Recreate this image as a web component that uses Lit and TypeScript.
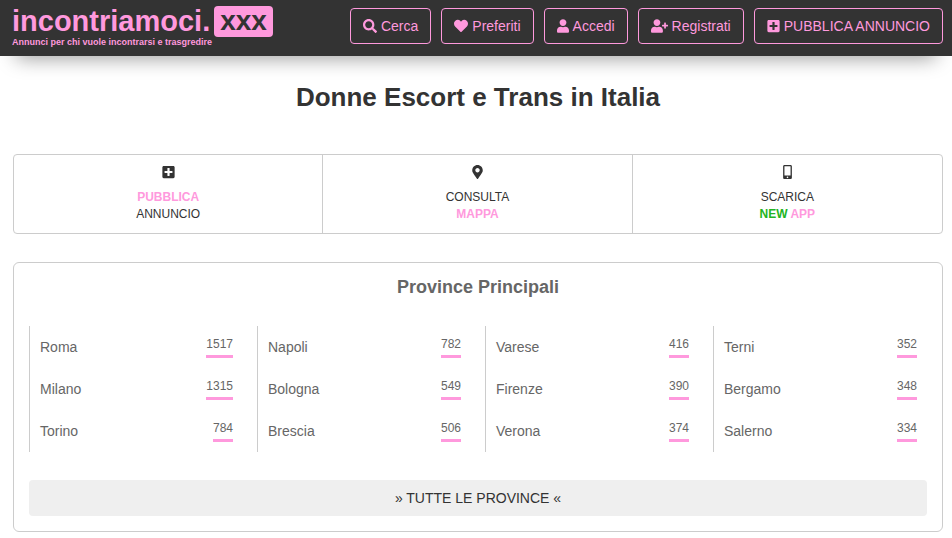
import { LitElement, html, css, svg } from "lit";
import { customElement, property } from "lit/decorators.js";

type Glyph = { box: string; width: number; d: string };

const glyphs: Record<string, Glyph> = {
  search: {
    box: "0 0 512 512",
    width: 14,
    d: "M505 442.7L405.3 343c-4.500-4.500-10.600-7-17-7H372c27.600-35.300 44-79.700 44-128C416 93.100 322.900 0 208 0S0 93.100 0 208s93.100 208 208 208c48.300 0 92.700-16.400 128-44v16.300c0 6.400 2.500 12.500 7 17l99.700 99.700c9.400 9.400 24.600 9.400 33.900 0l28.300-28.300c9.400-9.400 9.400-24.600.1-34zM208 336c-70.700 0-128-57.200-128-128 0-70.700 57.200-128 128-128 70.700 0 128 57.200 128 128 0 70.700-57.200 128-128 128z",
  },
  heart: {
    box: "0 0 512 512",
    width: 14,
    d: "M462.3 62.600C407.500 15.900 326 24.300 275.700 76.200L256 96.500l-19.700-20.300C186.100 24.300 104.500 15.900 49.700 62.600c-62.800 53.600-66.100 149.800-9.900 207.900l193.500 199.800c12.500 12.900 32.800 12.900 45.300 0l193.500-199.800c56.300-58.100 53-154.300-9.800-207.900z",
  },
  user: {
    box: "0 0 448 512",
    width: 12,
    d: "M224 256c70.700 0 128-57.300 128-128S294.700 0 224 0 96 57.300 96 128s57.300 128 128 128zm89.600 32h-16.700c-22.200 10.200-46.900 16-72.900 16s-50.600-5.800-72.900-16h-16.700C60.200 288 0 348.200 0 422.400V464c0 26.500 21.500 48 48 48h352c26.500 0 48-21.500 48-48v-41.600c0-74.200-60.200-134.400-134.400-134.400z",
  },
  userPlus: {
    box: "0 0 640 512",
    width: 17,
    d: "M624 208h-64v-64c0-8.800-7.200-16-16-16h-32c-8.800 0-16 7.200-16 16v64h-64c-8.800 0-16 7.200-16 16v32c0 8.800 7.200 16 16 16h64v64c0 8.800 7.200 16 16 16h32c8.800 0 16-7.200 16-16v-64h64c8.800 0 16-7.200 16-16v-32c0-8.800-7.200-16-16-16zm-400 48c70.700 0 128-57.300 128-128S294.700 0 224 0 96 57.300 96 128s57.300 128 128 128zm89.600 32h-16.700c-22.200 10.200-46.900 16-72.900 16s-50.600-5.800-72.900-16h-16.700C60.200 288 0 348.200 0 422.400V464c0 26.500 21.500 48 48 48h352c26.500 0 48-21.500 48-48v-41.600c0-74.200-60.200-134.400-134.400-134.400z",
  },
  plusSquare: {
    box: "0 0 448 512",
    width: 13,
    d: "M400 32H48C21.500 32 0 53.500 0 80v352c0 26.500 21.500 48 48 48h352c26.500 0 48-21.500 48-48V80c0-26.500-21.500-48-48-48zm-32 252c0 6.600-5.400 12-12 12h-92v92c0 6.600-5.400 12-12 12h-56c-6.600 0-12-5.400-12-12v-92H92c-6.600 0-12-5.400-12-12v-56c0-6.600 5.400-12 12-12h92v-92c0-6.600 5.400-12 12-12h56c6.600 0 12 5.400 12 12v92h92c6.600 0 12 5.400 12 12v56z",
  },
  pin: {
    box: "0 0 384 512",
    width: 11,
    d: "M172.268 501.670C26.970 291.031 0 269.413 0 192 0 85.961 85.961 0 192 0s192 85.961 192 192c0 77.413-26.970 99.031-172.268 309.670-9.535 13.774-29.930 13.773-39.464 0zM192 272c44.183 0 80-35.817 80-80s-35.817-80-80-80-80 35.817-80 80 35.817 80 80 80z",
  },
  phone: {
    box: "0 0 320 512",
    width: 9,
    d: "M272 0H48C21.500 0 0 21.500 0 48v416c0 26.500 21.500 48 48 48h224c26.500 0 48-21.500 48-48V48c0-26.500-21.500-48-48-48zM160 480c-17.700 0-32-14.300-32-32s14.300-32 32-32 32 14.300 32 32-14.300 32-32 32zm112-108c0 6.600-5.400 12-12 12H60c-6.600 0-12-5.400-12-12V60c0-6.600 5.400-12 12-12h200c6.600 0 12 5.400 12 12v312z",
  },
};

@customElement("ui-icon")
export class UiIcon extends LitElement {
  @property() name = "search";

  static styles = css`
    :host {
      display: inline-flex;
      flex: none;
    }
    .glyph {
      display: block;
      fill: currentColor;
    }
  `;

  render() {
    const g = glyphs[this.name];
    return html`<svg class="glyph" viewBox=${g.box} width=${g.width} height="14" aria-hidden="true">
      ${svg`<path d=${g.d}></path>`}
    </svg>`;
  }
}

const actions = [
  { icon: "search", label: "Cerca" },
  { icon: "heart", label: "Preferiti" },
  { icon: "user", label: "Accedi" },
  { icon: "userPlus", label: "Registrati" },
  { icon: "plusSquare", label: "PUBBLICA ANNUNCIO" },
];

const provinces: [string, number][][] = [
  [["Roma", 1517], ["Milano", 1315], ["Torino", 784]],
  [["Napoli", 782], ["Bologna", 549], ["Brescia", 506]],
  [["Varese", 416], ["Firenze", 390], ["Verona", 374]],
  [["Terni", 352], ["Bergamo", 348], ["Salerno", 334]],
];

@customElement("app-root")
export class AppRoot extends LitElement {
  static styles = css`
    :host {
      display: block;
      font: 14px/20px "Liberation Sans", Arial, sans-serif;
      color: #333;
      --pink: #ff99dd;
      --line: #ccc;
    }
    * {
      box-sizing: border-box;
    }
    a {
      color: inherit;
      text-decoration: none;
    }
    .bar {
      display: flex;
      justify-content: space-between;
      align-items: flex-start;
      height: 56px;
      padding: 6px 9px 0 12px;
      background: #333;
      color: var(--pink);
      box-shadow: 0 18px 20px -16px rgba(0, 0, 0, 0.4);
    }
    .logo {
      display: grid;
      grid-template-columns: auto auto;
      column-gap: 4px;
      font-weight: bold;
    }
    .name {
      font-size: 29px;
      line-height: 30px;
    }
    .tld {
      height: 31px;
      padding: 0 6px;
      border-radius: 4px;
      background: var(--pink);
      color: #333;
      font-size: 28px;
      line-height: 30px;
    }
    .tagline {
      grid-column: 1 / -1;
      font-size: 9px;
      line-height: 10px;
    }
    .actions {
      display: flex;
      gap: 10px;
      padding-top: 2px;
    }
    .action {
      display: flex;
      align-items: center;
      gap: 4px;
      height: 36px;
      padding: 0 12px;
      border: 1px solid var(--pink);
      border-radius: 4px;
      background: none;
      color: inherit;
      font: inherit;
      white-space: nowrap;
    }
    .page {
      padding: 24px 9px 6px 13px;
    }
    .title {
      margin: 0 0 40px;
      font-size: 26px;
      line-height: 34px;
      text-align: center;
    }
    .shortcuts {
      display: grid;
      grid-template-columns: repeat(3, 1fr);
      margin-bottom: 28px;
      border: 1px solid var(--line);
      border-radius: 4px;
    }
    .shortcut {
      display: flex;
      flex-direction: column;
      align-items: center;
      padding: 10px 0;
      font-size: 12px;
      line-height: 17px;
    }
    .shortcut:not(:last-child) {
      border-right: 1px solid var(--line);
    }
    .shortcut ui-icon {
      margin-bottom: 10px;
    }
    .pink {
      color: var(--pink);
    }
    .green {
      color: #22b422;
    }
    .panel {
      padding: 14px 15px 15px;
      border: 1px solid var(--line);
      border-radius: 6px;
      color: #666;
    }
    .subtitle {
      margin: 0 0 29px;
      font-size: 18px;
      line-height: 20px;
      text-align: center;
    }
    .provinces {
      display: grid;
      grid-template-columns: repeat(4, 1fr);
      column-gap: 24px;
      padding-right: 10px;
      margin-bottom: 28px;
    }
    .column {
      margin: 0;
      padding: 0 0 0 10px;
      border-left: 1px solid var(--line);
      list-style: none;
    }
    .province {
      display: flex;
      justify-content: space-between;
      align-items: center;
      height: 42px;
    }
    .count {
      margin-bottom: 4px;
      border-bottom: 3px solid var(--pink);
      font-size: 12px;
      line-height: 22px;
    }
    .all {
      display: block;
      width: 100%;
      height: 36px;
      border: 0;
      border-radius: 4px;
      background: #efefef;
      color: #333;
      font: inherit;
    }
  `;

  render() {
    return html`
      <header class="bar">
        <a class="logo" href="#">
          <span class="name">incontriamoci.</span>
          <span class="tld">xxx</span>
          <span class="tagline">Annunci per chi vuole incontrarsi e trasgredire</span>
        </a>
        <nav class="actions">
          ${actions.map(
            (a) => html`<button class="action"><ui-icon name=${a.icon}></ui-icon>${a.label}</button>`
          )}
        </nav>
      </header>
      <main class="page">
        <h1 class="title">Donne Escort e Trans in Italia</h1>
        <nav class="shortcuts">
          <a class="shortcut" href="#">
            <ui-icon name="plusSquare"></ui-icon>
            <b class="pink">PUBBLICA</b>
            <span>ANNUNCIO</span>
          </a>
          <a class="shortcut" href="#">
            <ui-icon name="pin"></ui-icon>
            <span>CONSULTA</span>
            <b class="pink">MAPPA</b>
          </a>
          <a class="shortcut" href="#">
            <ui-icon name="phone"></ui-icon>
            <span>SCARICA</span>
            <b class="pink"><span class="green">NEW</span> APP</b>
          </a>
        </nav>
        <section class="panel">
          <h2 class="subtitle">Province Principali</h2>
          <div class="provinces">
            ${provinces.map(
              (column) => html`<ul class="column">
                ${column.map(
                  ([name, count]) => html`<li>
                    <a class="province" href="#"><span>${name}</span><span class="count">${count}</span></a>
                  </li>`
                )}
              </ul>`
            )}
          </div>
          <button class="all">» TUTTE LE PROVINCE «</button>
        </section>
      </main>
    `;
  }
}
